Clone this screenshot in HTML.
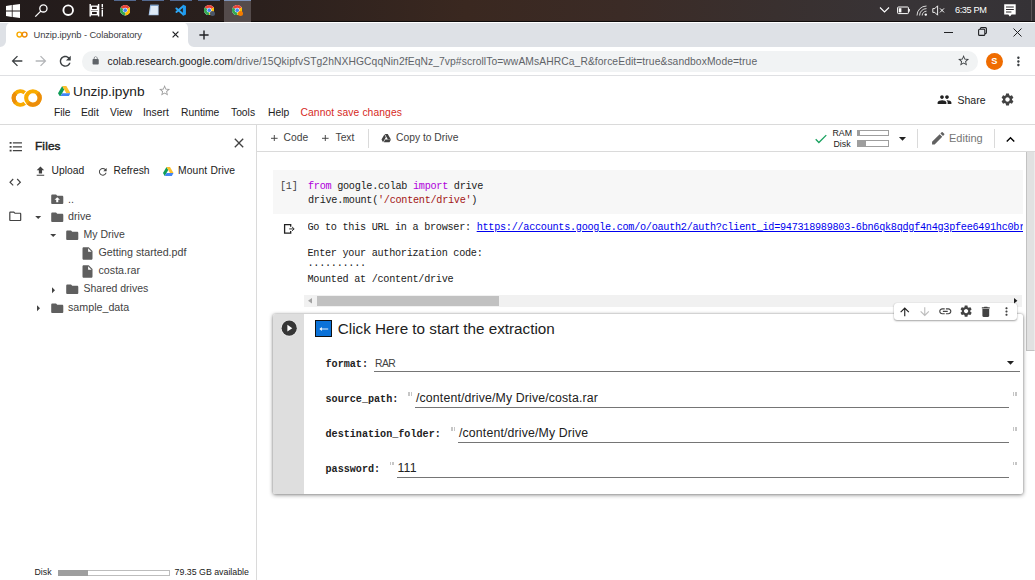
<!DOCTYPE html>
<html>
<head>
<meta charset="utf-8">
<title>Unzip.ipynb - Colaboratory</title>
<style>
*{box-sizing:border-box;margin:0;padding:0}
html,body{width:1035px;height:580px;overflow:hidden;background:#fff;font-family:"Liberation Sans",sans-serif;color:#212121}
.abs{position:absolute}
#root{position:relative;width:1035px;height:580px;overflow:hidden}
/* taskbar */
#taskbar{left:0;top:0;width:1035px;height:21.5px;border-bottom:1.2px solid #100c0c;background:linear-gradient(90deg,#221b1b 0%,#2b201d 25%,#3a2820 45%,#3b2b26 60%,#39302f 75%,#383437 88%,#353236 100%)}
/* tabstrip */
#tabstrip{left:0;top:23.3px;width:1035px;height:23.7px;background:#dee1e6}
#tab{left:5.5px;top:22px;width:182.3px;height:25px;background:#fff;border-radius:6px 6px 0 0}
#tabtitle{left:33.5px;top:28.5px;font-size:9.4px;color:#3c4043;white-space:nowrap;letter-spacing:-0.1px}
/* toolbar */
#toolbar{left:0;top:47px;width:1035px;height:29px;background:#fff;border-bottom:1.2px solid #dfe0e3}
#urlpill{left:82.3px;top:51.2px;width:895.5px;height:20.6px;border-radius:10.3px;background:#f1f3f4}
#url{left:107.5px;top:56px;font-size:10.3px;color:#5f6368;white-space:nowrap;letter-spacing:0.085px}
#url b{font-weight:normal;color:#202124}
/* colab header */
#chead{left:0;top:76px;width:1035px;height:49px;background:#fff;border-bottom:1px solid #dadada}
#doctitle{left:73px;top:84px;font-size:13.7px;color:#212121;white-space:nowrap}
.menu{top:106.5px;font-size:10.3px;color:#212121;white-space:nowrap}
/* left panel */
#left{left:0;top:125px;width:257px;height:455px;background:#fff;border-right:1px solid #dadada}
.t{font-size:10.3px;color:#424242;white-space:nowrap}
/* notebook toolbar */
#nbtool{left:257px;top:125px;width:778px;height:27px;background:#fff;border-bottom:1px solid #dadada}

/* tree */
.row{left:0;width:256px;height:18px}
.fold{fill:#616161}
/* cells */
#code1{left:273px;top:170px;width:750px;height:44px;background:#f7f7f7}
.code{font-family:"Liberation Mono",monospace;font-size:10.2px;letter-spacing:-0.28px;white-space:pre;color:#212121}
#hsb{left:304px;top:295px;width:718px;height:11.7px;background:#f1f1f1}
#hsbthumb{left:317.2px;top:296.2px;width:182px;height:9.5px;background:#c1c1c1}
#vsb{left:1024px;top:153px;width:11px;height:427px;background:#fff;display:none}
#vsbthumb{left:1026px;top:151.5px;width:9px;height:199.5px;background:#e1e1e1;border-left:1px solid #c2c2c2;border-bottom:1px solid #c2c2c2;border-right:1px solid #ececec}
#card{left:273.3px;top:313.5px;width:749.7px;height:180.5px;border-radius:2px;background:#fff;box-shadow:0 1px 4px rgba(0,0,0,.45),0 0 2px rgba(0,0,0,.25)}
#gutter{left:273.3px;top:313.5px;width:30.5px;height:180.5px;background:#dedede;border-radius:2px 0 0 2px}
#ftitle{left:337.8px;top:320px;font-size:15.25px;color:#212121;white-space:nowrap}
.flabel{left:325.5px;font-family:"Liberation Mono",monospace;font-weight:bold;font-size:10.12px;color:#212121;white-space:pre}
.fval{font-size:12.3px;letter-spacing:0.15px;color:#212121;white-space:nowrap}
.fline{height:1px;background:#757575}
.q{font-size:10px;color:#bdbdbd}
#ctool{left:894px;top:303px;width:123.3px;height:17px;background:#fff;border-radius:3px;box-shadow:0 1px 2px rgba(0,0,0,.35),0 0 1px rgba(0,0,0,.2)}
.mono{font-family:"Liberation Mono",monospace}
</style>
</head>
<body>
<div id="root">

<!-- TASKBAR -->
<div id="taskbar" class="abs"></div>


<!-- taskbar indicators -->
<div class="abs" style="left:114px;top:0;width:22px;height:1px;background:#54698f"></div>
<div class="abs" style="left:142px;top:0;width:22px;height:1px;background:#54698f"></div>
<div class="abs" style="left:170px;top:0;width:22px;height:1px;background:#54698f"></div>
<div class="abs" style="left:198px;top:0;width:22px;height:1px;background:#54698f"></div>
<div class="abs" style="left:223.5px;top:0;width:27px;height:21.5px;background:#544b4b"></div>
<div class="abs" style="left:223.5px;top:0;width:27px;height:1px;background:#7f93b8"></div>
<!-- windows logo -->
<svg class="abs" style="left:6px;top:3.5px" width="14" height="14" viewBox="0 0 14 14"><path d="M0 2 L5.8 1.1 V6.6 H0Z M6.6 1 L14 0 V6.6 H6.6Z M0 7.4 H5.8 V12.9 L0 12Z M6.6 7.4 H14 V14 L6.6 13Z" fill="#fff"/></svg>
<!-- search -->
<svg class="abs" style="left:34px;top:3px" width="16" height="16" viewBox="0 0 16 16"><circle cx="9.4" cy="5.4" r="3.6" fill="none" stroke="#fff" stroke-width="1.3"/><path d="M6.8 8.1 L1.3 13.6" stroke="#fff" stroke-width="1.3" fill="none"/></svg>
<!-- cortana -->
<svg class="abs" style="left:62px;top:3.8px" width="12.4" height="12.4" viewBox="0 0 12.4 12.4"><circle cx="6.2" cy="6.2" r="4.8" fill="none" stroke="#fff" stroke-width="1.9"/></svg>
<!-- task view -->
<svg class="abs" style="left:88.5px;top:4px" width="15" height="12.5" viewBox="0 0 15 12.5"><path d="M1.2 0 V12.5 M9.6 0 V12.5 M13.3 0 V3 M13.3 6 V12.5" stroke="#fff" stroke-width="1.4" fill="none"/><rect x="2.4" y="2.2" width="6" height="3.4" fill="none" stroke="#fff" stroke-width="1.3"/><rect x="2.4" y="7.3" width="6" height="3.4" fill="none" stroke="#fff" stroke-width="1.3"/><circle cx="13.3" cy="4.5" r="0.9" fill="#fff"/></svg>
<svg class="abs" style="left:120.0px;top:5.2px" width="10.4" height="10.4" viewBox="0 0 48 48">
<circle cx="24" cy="24" r="24" fill="#fff"/>
<path d="M24 24 L3.2 12 A24 24 0 0 1 44.8 12 Z" fill="#ea4335"/>
<path d="M24 24 L44.8 12 A24 24 0 0 1 24 48 Z" fill="#fbbc04"/>
<path d="M24 24 L24 48 A24 24 0 0 1 3.2 12 Z" fill="#34a853"/>
<circle cx="24" cy="24" r="11" fill="#fff"/>
<circle cx="24" cy="24" r="8.5" fill="#4285f4"/>
</svg>
<!-- notepad -->
<svg class="abs" style="left:147.5px;top:4px" width="12" height="12" viewBox="0 0 12 12"><path d="M2.2 0.8 H10.6 V11.2 H0.6Z" fill="#a9c6e8"/><path d="M3.2 2 H9.8 V10.4 H1.8Z" fill="#dfeaf6"/><path d="M2.2 0.8 H10.6 V1.8 H2.1Z" fill="#6f93bd"/></svg>
<!-- vscode -->
<svg class="abs" style="left:174.6px;top:3.8px" width="11.2" height="12.4" viewBox="0 0 24 26"><path d="M17.500 4.500 L3 16.800 M17.500 21.500 L3 9.200" stroke="#2da6f3" stroke-width="4.200" stroke-linecap="round" fill="none"/><path d="M16.800 0.800 L23.500 4 V22 L16.800 25.200Z" fill="#1f9bf0"/></svg>
<svg class="abs" style="left:204.10000000000002px;top:4.999999999999999px" width="10.4" height="10.4" viewBox="0 0 48 48">
<circle cx="24" cy="24" r="24" fill="#fff"/>
<path d="M24 24 L3.2 12 A24 24 0 0 1 44.8 12 Z" fill="#ea4335"/>
<path d="M24 24 L44.8 12 A24 24 0 0 1 24 48 Z" fill="#fbbc04"/>
<path d="M24 24 L24 48 A24 24 0 0 1 3.2 12 Z" fill="#34a853"/>
<circle cx="24" cy="24" r="11" fill="#fff"/>
<circle cx="24" cy="24" r="8.5" fill="#4285f4"/>
</svg><div class="abs" style="left:209.8px;top:10.7px;width:5.5px;height:5.5px;border-radius:50%;background:#4a5568"></div><svg class="abs" style="left:232.0px;top:4.999999999999999px" width="10.4" height="10.4" viewBox="0 0 48 48">
<circle cx="24" cy="24" r="24" fill="#fff"/>
<path d="M24 24 L3.2 12 A24 24 0 0 1 44.8 12 Z" fill="#ea4335"/>
<path d="M24 24 L44.8 12 A24 24 0 0 1 24 48 Z" fill="#fbbc04"/>
<path d="M24 24 L24 48 A24 24 0 0 1 3.2 12 Z" fill="#34a853"/>
<circle cx="24" cy="24" r="11" fill="#fff"/>
<circle cx="24" cy="24" r="8.5" fill="#4285f4"/>
</svg><div class="abs" style="left:237.7px;top:10.7px;width:5.5px;height:5.5px;border-radius:50%;background:#f57c00"></div>
<!-- tray -->
<svg class="abs" style="left:879px;top:6px" width="11" height="8" viewBox="0 0 11 8"><path d="M1 1.5 L5.5 6 L10 1.5" stroke="#fff" stroke-width="1.1" fill="none"/></svg>
<svg class="abs" style="left:897px;top:6px" width="13" height="9" viewBox="0 0 13 9"><rect x="0.6" y="1" width="10.8" height="6.6" rx="0.8" fill="none" stroke="#fff" stroke-width="1"/><rect x="1.8" y="2.2" width="2.6" height="4.2" fill="#fff"/><rect x="11.8" y="3" width="1" height="2.6" fill="#fff"/></svg>
<svg class="abs" style="left:916px;top:5px" width="12" height="11" viewBox="0 0 12 11"><path d="M1 10.5 A9.5 9.5 0 0 1 10.5 1 M3.6 10.5 A6.9 6.9 0 0 1 10.5 3.6 M6.2 10.5 A4.3 4.3 0 0 1 10.5 6.2" stroke="#d8d8d8" stroke-width="1" fill="none"/><circle cx="9.8" cy="9.6" r="1.2" fill="#fff"/></svg>
<svg class="abs" style="left:932px;top:5px" width="14" height="11" viewBox="0 0 14 11"><path d="M0.8 3.6 H2.8 L5.6 0.8 V10.2 L2.8 7.4 H0.8Z" fill="none" stroke="#fff" stroke-width="0.9"/><path d="M8 3.4 L12 7.4 M12 3.4 L8 7.4" stroke="#fff" stroke-width="1" fill="none"/></svg>
<div class="abs" style="left:955px;top:4.5px;font-size:9.2px;color:#fff;letter-spacing:-0.4px;white-space:nowrap">6:35 PM</div>
<svg class="abs" style="left:1004px;top:4px" width="12" height="13" viewBox="0 0 12 13"><path d="M0.2 0.2 H11.700 V10.400 H7.600 L5.900 12.500 L4.300 10.400 H0.200Z" fill="#fff"/><path d="M2 3 H9.800 M2 5.500 H9.800 M2 8 H7.400" stroke="#2e2a2d" stroke-width="1.15" fill="none"/></svg>
<div class="abs" style="left:1031px;top:0;width:1px;height:21px;background:#5a5558"></div>

<div class="abs" style="left:0;top:21.5px;width:1035px;height:2px;background:#fff"></div>
<!-- TAB STRIP -->
<div id="tabstrip" class="abs"></div>
<div id="tab" class="abs"></div>
<div id="tabtitle" class="abs">Unzip.ipynb - Colaboratory</div>


<!-- tab bottom flares -->
<svg class="abs" style="left:0;top:41px" width="6" height="6" viewBox="0 0 6 6"><path d="M6 0 V6 H0 A6 6 0 0 0 6 0Z" fill="#fff"/></svg>
<svg class="abs" style="left:188px;top:41px" width="6" height="6" viewBox="0 0 6 6"><path d="M0 0 V6 H6 A6 6 0 0 1 0 0Z" fill="#fff"/></svg>
<!-- favicon -->
<svg class="abs" style="left:15.5px;top:31px" width="12" height="7" viewBox="0 0 12 7"><circle cx="3.4" cy="3.5" r="2.4" fill="none" stroke="#f9ab00" stroke-width="1.45"/><circle cx="8.6" cy="3.5" r="2.4" fill="none" stroke="#ee8c0a" stroke-width="1.45"/></svg>
<!-- tab close / new tab -->
<svg class="abs" style="left:172.3px;top:31.2px" width="7" height="7" viewBox="0 0 7 7"><path d="M0.6 0.6 L6.4 6.4 M6.4 0.6 L0.6 6.4" stroke="#202124" stroke-width="1.2"/></svg>
<svg class="abs" style="left:199.4px;top:29.7px" width="10" height="10" viewBox="0 0 10 10"><path d="M5 0.4 V9.6 M0.4 5 H9.6" stroke="#202124" stroke-width="1.4"/></svg>
<!-- window controls -->
<div class="abs" style="left:944px;top:32px;width:8.5px;height:1.1px;background:#202124"></div>
<svg class="abs" style="left:978.3px;top:27.3px" width="9" height="9" viewBox="0 0 9 9"><rect x="0.6" y="2.2" width="6.2" height="6.2" rx="1" fill="none" stroke="#202124" stroke-width="1.1"/><path d="M2.4 2 V1.6 A1 1 0 0 1 3.4 0.6 H7.4 A1 1 0 0 1 8.4 1.6 V5.6 A1 1 0 0 1 7.4 6.6 H7" fill="none" stroke="#202124" stroke-width="1.1"/></svg>
<svg class="abs" style="left:1013px;top:27.5px" width="9" height="9" viewBox="0 0 9 9"><path d="M0.5 0.5 L8.5 8.5 M8.5 0.5 L0.5 8.5" stroke="#202124" stroke-width="1"/></svg>

<!-- BROWSER TOOLBAR -->
<div id="toolbar" class="abs"></div>
<div id="urlpill" class="abs"></div>
<div id="url" class="abs"><b>colab.research.google.com</b>/drive/15QkipfvSTg2hNXHGCqqNin2fEqNz_7vp#scrollTo=wwAMsAHRCa_R&amp;forceEdit=true&amp;sandboxMode=true</div>


<!-- toolbar icons -->
<svg class="abs" style="left:8.70px;top:53.00px" width="16" height="16" viewBox="0 0 24 24"><path d="M20 11H7.83l5.59-5.59L12 4l-8 8 8 8 1.41-1.41L7.83 13H20v-2z" fill="#3c4043"/></svg><svg class="abs" style="left:33.00px;top:53.00px" width="16" height="16" viewBox="0 0 24 24"><path d="M12 4l-1.41 1.41L16.17 11H4v2h12.17l-5.58 5.59L12 20l8-8z" fill="#b4b6b9"/></svg><svg class="abs" style="left:57.15px;top:52.75px" width="16.5" height="16.5" viewBox="0 0 24 24"><path d="M17.65 6.35C16.2 4.9 14.21 4 12 4c-4.42 0-7.99 3.58-7.99 8s3.57 8 7.99 8c3.73 0 6.84-2.55 7.73-6h-2.08c-.82 2.33-3.04 4-5.65 4-3.31 0-6-2.69-6-6s2.69-6 6-6c1.66 0 3.14.69 4.22 1.78L13 11h7V4l-2.35 2.35z" fill="#3c4043"/></svg><svg class="abs" style="left:90.95px;top:56.25px" width="9.3" height="9.3" viewBox="0 0 24 24"><path d="M18 8h-1V6c0-2.76-2.24-5-5-5S7 3.24 7 6v2H6c-1.1 0-2 .9-2 2v10c0 1.1.9 2 2 2h12c1.1 0 2-.9 2-2V10c0-1.1-.9-2-2-2zm-2.9 0H8.9V6c0-1.71 1.39-3.1 3.1-3.1 1.71 0 3.1 1.39 3.1 3.1v2z" fill="#5f6368"/></svg><svg class="abs" style="left:956.90px;top:54.40px" width="13.2" height="13.2" viewBox="0 0 24 24"><path d="M22 9.24l-7.19-.62L12 2 9.19 8.63 2 9.24l5.46 4.73L5.82 21 12 17.27 18.18 21l-1.63-7.03L22 9.24zM12 15.4l-3.76 2.27 1-4.28-3.32-2.88 4.38-.38L12 6.1l1.71 4.04 4.38.38-3.32 2.88 1 4.28L12 15.4z" fill="#3c4043"/></svg>
<div class="abs" style="left:985.8px;top:52.5px;width:17px;height:17px;border-radius:50%;background:#ef6c00;color:#fff;font-size:9.2px;font-weight:bold;text-align:center;line-height:17px">S</div>
<svg class="abs" style="left:1011.1px;top:53.7px" width="14.8" height="14.8" viewBox="0 0 24 24"><path d="M12 8c1.1 0 2-.9 2-2s-.9-2-2-2-2 .9-2 2 .9 2 2 2zm0 2c-1.1 0-2 .9-2 2s.9 2 2 2 2-.9 2-2-.9-2-2-2zm0 6c-1.1 0-2 .9-2 2s.9 2 2 2 2-.9 2-2-.9-2-2-2z" fill="#3c4043"/></svg>
<!-- COLAB HEADER -->
<div id="chead" class="abs"></div>

<!-- colab logo -->
<svg class="abs" style="left:11px;top:89px" width="32" height="18" viewBox="0 0 32 18">
<path d="M13.74 3.83 A6.75 6.75 0 1 0 13.74 14.17" fill="none" stroke="#f9ab00" stroke-width="4"/>
<path d="M4.63 4.23 A6.75 6.75 0 0 0 4.63 13.77" fill="none" stroke="#ec8d0a" stroke-width="4.1"/>
<circle cx="21.9" cy="9" r="6.75" fill="none" stroke="#fff" stroke-width="4.9"/>
<circle cx="21.9" cy="9" r="6.75" fill="none" stroke="#f9ab00" stroke-width="4.1"/>
<path d="M26.67 4.23 A6.75 6.75 0 0 1 21.9 15.75 A6.75 6.75 0 0 1 17.13 13.77" fill="none" stroke="#ec8d0a" stroke-width="4.1"/>
</svg>
<svg class="abs" style="left:57.5px;top:85.5px" width="12.5" height="10.82" viewBox="0 0 24 20.8"><path d="M8 0 L0 13.86 L4 20.8 L12 6.93Z" fill="#0f9d58"/><path d="M8 0 H16 L24 13.86 H16Z" fill="#fbc02d"/><path d="M8 13.86 H24 L20 20.8 H4Z" fill="#4285f4"/></svg><svg class="abs" style="left:158.4px;top:84.4px" width="13.2" height="13.2" viewBox="0 0 24 24"><path d="M22 9.24l-7.19-.62L12 2 9.19 8.63 2 9.24l5.46 4.73L5.82 21 12 17.27 18.18 21l-1.63-7.03L22 9.24zM12 15.4l-3.76 2.27 1-4.28-3.32-2.88 4.38-.38L12 6.1l1.71 4.04 4.38.38-3.32 2.88 1 4.28L12 15.4z" fill="#9e9e9e"/></svg><svg class="abs" style="left:936.50px;top:92.00px" width="15" height="15" viewBox="0 0 24 24"><path d="M16 11c1.66 0 2.99-1.34 2.99-3S17.66 5 16 5c-1.66 0-3 1.34-3 3s1.34 3 3 3zm-8 0c1.66 0 2.99-1.34 2.99-3S9.66 5 8 5C6.34 5 5 6.34 5 8s1.34 3 3 3zm0 2c-2.33 0-7 1.17-7 3.5V19h14v-2.5c0-2.33-4.67-3.5-7-3.5zm8 0c-.29 0-.62.02-.97.05 1.16.84 1.97 1.97 1.97 3.45V19h6v-2.5c0-2.33-4.67-3.5-7-3.5z" fill="#212121"/></svg><svg class="abs" style="left:999.8px;top:92px" width="15" height="15" viewBox="0 0 24 24"><path d="M19.14 12.94c.04-.3.06-.61.06-.94 0-.32-.02-.64-.07-.94l2.03-1.58c.18-.14.23-.41.12-.61l-1.92-3.32c-.12-.22-.37-.29-.59-.22l-2.39.96c-.5-.38-1.03-.7-1.62-.94l-.36-2.54c-.04-.24-.24-.41-.48-.41h-3.84c-.24 0-.43.17-.47.41l-.36 2.54c-.59.24-1.13.57-1.62.94l-2.39-.96c-.22-.08-.47 0-.59.22L2.74 8.87c-.12.21-.08.47.12.61l2.03 1.58c-.05.3-.09.63-.09.94s.02.64.07.94l-2.03 1.58c-.18.14-.23.41-.12.61l1.92 3.32c.12.22.37.29.59.22l2.39-.96c.5.38 1.03.7 1.62.94l.36 2.54c.05.24.24.41.48.41h3.84c.24 0 .44-.17.47-.41l.36-2.54c.59-.24 1.13-.56 1.62-.94l2.39.96c.22.08.47 0 .59-.22l1.92-3.32c.12-.22.07-.47-.12-.61l-2.01-1.58zM12 15.6c-1.98 0-3.6-1.62-3.6-3.6s1.62-3.6 3.6-3.6 3.6 1.62 3.6 3.6-1.62 3.6-3.6 3.6z" fill="#424242"/></svg>
<div id="doctitle" class="abs">Unzip.ipynb</div>
<div class="abs menu" style="left:54px">File</div>
<div class="abs menu" style="left:81px">Edit</div>
<div class="abs menu" style="left:110px">View</div>
<div class="abs menu" style="left:143px">Insert</div>
<div class="abs menu" style="left:181px">Runtime</div>
<div class="abs menu" style="left:231px">Tools</div>
<div class="abs menu" style="left:268px">Help</div>
<div class="abs menu" style="left:300.5px;color:#d62a24;letter-spacing:0.1px">Cannot save changes</div>

<!-- LEFT PANEL -->
<div id="left" class="abs"></div>

<!-- NOTEBOOK TOOLBAR -->
<div id="nbtool" class="abs"></div>


<!-- left panel icons -->
<svg class="abs" style="left:7.9px;top:139.1px" width="15.6" height="15.6" viewBox="0 0 24 24"><path d="M2.5 4.700 h3 v2.600 h-3z M2.500 10.700 h3 v2.600 h-3z M2.500 16.700 h3 v2.600 h-3z M7.500 5.100 h14 v1.800 h-14z M7.500 11.100 h14 v1.800 h-14z M7.500 17.100 h14 v1.800 h-14z" fill="#424242"/></svg><svg class="abs" style="left:230.50px;top:135.00px" width="16" height="16" viewBox="0 0 24 24"><path d="M19 6.41L17.59 5 12 10.59 6.41 5 5 6.41 10.59 12 5 17.59 6.41 19 12 13.41 17.59 19 19 17.59 13.41 12z" fill="#424242"/></svg><svg class="abs" style="left:34.35px;top:165.15px" width="12.9" height="12.9" viewBox="0 0 24 24"><path d="M9 16h6v-6h4l-7-7-7 7h4zm-4 2h14v2H5z" fill="#424242"/></svg><svg class="abs" style="left:96.9px;top:165.6px" width="11.6" height="11.6" viewBox="0 0 24 24"><path d="M17.65 6.35C16.2 4.9 14.21 4 12 4c-4.42 0-7.99 3.58-7.99 8s3.57 8 7.99 8c3.73 0 6.84-2.55 7.73-6h-2.08c-.82 2.33-3.04 4-5.65 4-3.31 0-6-2.69-6-6s2.69-6 6-6c1.66 0 3.14.69 4.22 1.78L13 11h7V4l-2.35 2.35z" fill="#424242"/></svg><svg class="abs" style="left:163px;top:166.5px" width="10.5" height="9.09" viewBox="0 0 24 20.8"><path d="M8 0 L0 13.86 L4 20.8 L12 6.93Z" fill="#0f9d58"/><path d="M8 0 H16 L24 13.86 H16Z" fill="#fbc02d"/><path d="M8 13.86 H24 L20 20.8 H4Z" fill="#4285f4"/></svg><svg class="abs" style="left:8.30px;top:174.50px" width="14.4" height="14.4" viewBox="0 0 24 24"><path d="M9.4 16.6L4.8 12l4.6-4.6L8 6l-6 6 6 6 1.4-1.4zm5.2 0l4.6-4.6-4.6-4.6L16 6l6 6-6 6-1.4-1.4z" fill="#424242"/></svg><svg class="abs" style="left:8.25px;top:209.25px" width="14.5" height="14.5" viewBox="0 0 24 24"><path d="M9.17 6l2 2H20v10H4V6h5.17M10 4H4c-1.1 0-1.99.9-1.99 2L2 18c0 1.1.9 2 2 2h16c1.1 0 2-.9 2-2V8c0-1.1-.9-2-2-2h-8l-2-2z" fill="#424242"/></svg><svg class="abs" style="left:49.75px;top:191.75px" width="14.5" height="14.5" viewBox="0 0 24 24"><path d="M10 4H4c-1.1 0-1.99.9-1.99 2L2 18c0 1.1.9 2 2 2h16c1.1 0 2-.9 2-2V8c0-1.1-.9-2-2-2h-8l-2-2z" fill="#5f5f5f"/><path d="M12 8.500 L16.500 13 H13.700 V17 H10.300 V13 H7.500Z" fill="#fff"/></svg><svg class="abs" style="left:30.80px;top:209.80px" width="14.4" height="14.4" viewBox="0 0 24 24"><path d="M7 10l5 5 5-5z" fill="#424242"/></svg><svg class="abs" style="left:49.75px;top:209.55px" width="14.5" height="14.5" viewBox="0 0 24 24"><path d="M10 4H4c-1.1 0-1.99.9-1.99 2L2 18c0 1.1.9 2 2 2h16c1.1 0 2-.9 2-2V8c0-1.1-.9-2-2-2h-8l-2-2z" fill="#5f5f5f"/></svg><svg class="abs" style="left:46.30px;top:227.50px" width="14.4" height="14.4" viewBox="0 0 24 24"><path d="M7 10l5 5 5-5z" fill="#424242"/></svg><svg class="abs" style="left:64.75px;top:227.55px" width="14.5" height="14.5" viewBox="0 0 24 24"><path d="M10 4H4c-1.1 0-1.99.9-1.99 2L2 18c0 1.1.9 2 2 2h16c1.1 0 2-.9 2-2V8c0-1.1-.9-2-2-2h-8l-2-2z" fill="#5f5f5f"/></svg><svg class="abs" style="left:79.80px;top:245.50px" width="15" height="15" viewBox="0 0 24 24"><path d="M6 2c-1.1 0-1.99.9-1.99 2L4 20c0 1.1.89 2 1.99 2H18c1.1 0 2-.9 2-2V8l-6-6H6zm7 7V3.500L18.500 9H13z" fill="#5f5f5f"/></svg><svg class="abs" style="left:79.80px;top:263.70px" width="15" height="15" viewBox="0 0 24 24"><path d="M6 2c-1.1 0-1.99.9-1.99 2L4 20c0 1.1.89 2 1.99 2H18c1.1 0 2-.9 2-2V8l-6-6H6zm7 7V3.500L18.500 9H13z" fill="#5f5f5f"/></svg><svg class="abs" style="left:46.10px;top:282.80px" width="14.4" height="14.4" viewBox="0 0 24 24"><path d="M10 17l5-5-5-5v10z" fill="#424242"/></svg><svg class="abs" style="left:64.75px;top:282.45px" width="14.5" height="14.5" viewBox="0 0 24 24"><path d="M10 4H4c-1.1 0-1.99.9-1.99 2L2 18c0 1.1.9 2 2 2h16c1.1 0 2-.9 2-2V8c0-1.1-.9-2-2-2h-8l-2-2z" fill="#5f5f5f"/></svg><svg class="abs" style="left:31.10px;top:300.80px" width="14.4" height="14.4" viewBox="0 0 24 24"><path d="M10 17l5-5-5-5v10z" fill="#424242"/></svg><svg class="abs" style="left:49.55px;top:300.55px" width="14.5" height="14.5" viewBox="0 0 24 24"><path d="M10 4H4c-1.1 0-1.99.9-1.99 2L2 18c0 1.1.9 2 2 2h16c1.1 0 2-.9 2-2V8c0-1.1-.9-2-2-2h-8l-2-2z" fill="#5f5f5f"/></svg>
<!-- files header -->
<div class="abs" style="left:35px;top:138.6px;font-size:11.8px;color:#212121;-webkit-text-stroke:0.45px #212121;letter-spacing:0.15px">Files</div>
<div class="abs t" style="left:51.5px;top:165px;color:#212121">Upload</div>
<div class="abs t" style="left:113.5px;top:165px;color:#212121">Refresh</div>
<div class="abs t" style="left:178px;top:165px;color:#212121;letter-spacing:0.15px">Mount Drive</div>
<!-- tree -->
<div class="abs t" style="left:68px;top:192.7px;font-size:10.7px">..</div>
<div class="abs t" style="left:68px;top:209.7px;font-size:10.7px">drive</div>
<div class="abs t" style="left:83.5px;top:227.7px;font-size:10.5px">My Drive</div>
<div class="abs t" style="left:98.5px;top:245.7px;font-size:10.7px">Getting started.pdf</div>
<div class="abs t" style="left:98.5px;top:263.7px;font-size:10.7px">costa.rar</div>
<div class="abs t" style="left:83.5px;top:281.7px;font-size:10.5px">Shared drives</div>
<div class="abs t" style="left:68px;top:300.7px;font-size:10.7px">sample_data</div>
<!-- disk -->
<div class="abs" style="left:34.5px;top:567.4px;font-size:8.8px;color:#212121">Disk</div>
<div class="abs" style="left:58px;top:569.5px;width:112px;height:6px;border:1px solid #bdbdbd;background:#fff"></div>
<div class="abs" style="left:58px;top:569.5px;width:30px;height:6px;background:#9e9e9e"></div>
<div class="abs" style="left:174.6px;top:567.4px;font-size:8.8px;color:#212121;white-space:nowrap">79.35 GB available</div>


<!-- nb toolbar icons -->
<svg class="abs" style="left:381.35px;top:132.75px" width="10.5" height="10.5" viewBox="0 0 24 24"><path d="M7.71 3.5L1.15 15l3.43 6 6.55-11.5L7.71 3.5zM9.73 15L6.3 21h13.12l3.43-6H9.73zM22.28 14L15.42 2H8.58l6.86 12h6.84z" fill="#424242"/></svg><svg class="abs" style="left:813.45px;top:130.75px" width="15.7" height="15.7" viewBox="0 0 24 24"><path d="M9 16.17L4.83 12l-1.42 1.41L9 19 21 7l-1.41-1.41z" fill="#1aa260"/></svg><svg class="abs" style="left:893.90px;top:130.10px" width="17" height="17" viewBox="0 0 24 24"><path d="M7 10l5 5 5-5z" fill="#212121"/></svg><svg class="abs" style="left:930.05px;top:130.15px" width="16.5" height="16.5" viewBox="0 0 24 24"><path d="M3 17.25V21h3.75L17.81 9.94l-3.75-3.75L3 17.25zM20.71 7.04c.39-.39.39-1.02 0-1.41l-2.34-2.34c-.39-.39-1.02-.39-1.41 0l-1.83 1.83 3.75 3.75 1.83-1.83z" fill="#616161"/></svg><svg class="abs" style="left:1002.30px;top:130.60px" width="17" height="17" viewBox="0 0 24 24"><path d="M12 8l-6 6 1.41 1.41L12 10.83l4.59 4.58L18 14z" fill="#000"/></svg><!-- notebook toolbar items -->
<svg class="abs" style="left:271.2px;top:134.9px" width="6.6" height="6.6" viewBox="0 0 7 7"><path d="M3.5 0 V7 M0 3.5 H7" stroke="#424242" stroke-width="1"/></svg><div class="abs t" style="left:283.5px;top:132px;color:#424242">Code</div>
<svg class="abs" style="left:322px;top:134.9px" width="6.6" height="6.6" viewBox="0 0 7 7"><path d="M3.5 0 V7 M0 3.5 H7" stroke="#424242" stroke-width="1"/></svg><div class="abs t" style="left:335.5px;top:132px;color:#424242">Text</div>
<div class="abs" style="left:368px;top:129px;width:1px;height:19px;background:#dadada"></div>
<div class="abs t" style="left:396px;top:132px;color:#424242">Copy to Drive</div>
<div class="abs" style="left:832.5px;top:128px;font-size:8.8px;color:#212121">RAM</div>
<div class="abs" style="left:833.5px;top:138.5px;font-size:8.8px;color:#212121">Disk</div>
<div class="abs" style="left:857px;top:129.5px;width:32px;height:6.5px;border:1px solid #9e9e9e;background:#fff"></div>
<div class="abs" style="left:857px;top:129.5px;width:3px;height:6.5px;background:#9e9e9e"></div>
<div class="abs" style="left:857px;top:140px;width:32px;height:6.5px;border:1px solid #9e9e9e;background:#fff"></div>
<div class="abs" style="left:857px;top:140px;width:9px;height:6.5px;background:#9e9e9e"></div>
<div class="abs" style="left:917px;top:129px;width:1px;height:19px;background:#dadada"></div>
<div class="abs" style="left:949px;top:131.5px;font-size:11px;color:#757575">Editing</div>
<div class="abs" style="left:993.5px;top:129px;width:1px;height:19px;background:#dadada"></div>
<div class="abs" style="left:957.5px;top:93.5px;font-size:10.5px;color:#212121">Share</div>

<!-- scrollbars -->
<div id="vsb" class="abs"></div><div id="vsbthumb" class="abs"></div>

<!-- cell 1 -->
<div id="code1" class="abs"></div>
<div class="abs code" style="left:280px;top:180.5px;color:#424242">[1]</div>
<div class="abs code" style="left:308px;top:180.5px"><span style="color:#af00db">from</span> google.colab <span style="color:#af00db">import</span> drive</div>
<div class="abs code" style="left:308px;top:194.5px">drive.mount(<span style="color:#a31515">'/content/drive'</span>)</div>
<div class="abs code" style="left:307.5px;top:221.5px;width:715.5px;overflow:hidden">Go to this URL in a browser: <span style="color:#0000ee;text-decoration:underline">https://accounts.google.com/o/oauth2/auth?client_id=947318989803-6bn6qk8qdgf4n4g3pfee6491hc0brc4i.apps.googleusercontent.com</span></div>
<div class="abs code" style="left:307.5px;top:247.5px">Enter your authorization code:</div>
<div class="abs code" style="left:307.5px;top:260px">··········</div>
<div class="abs code" style="left:307.5px;top:273.5px">Mounted at /content/drive</div>
<div id="hsb" class="abs"></div><div id="hsbthumb" class="abs"></div>

<!-- cell 2 -->
<div id="card" class="abs"></div>
<div id="gutter" class="abs"></div>
<div class="abs" style="left:314.7px;top:319.8px;width:17.1px;height:17.2px;background:#0b72d8;border:0.8px solid #111"></div>
<div id="ftitle" class="abs">Click Here to start the extraction</div>
<div class="abs flabel" style="top:359px">format:</div>
<div class="abs" style="left:375px;top:357.6px;font-size:10.4px;letter-spacing:-0.6px;color:#424242">RAR</div>
<div class="abs fline" style="left:374px;top:370.5px;width:645.5px"></div>
<div class="abs flabel" style="top:394px">source_path:</div>
<div class="abs fval" style="left:416px;top:391px">/content/drive/My Drive/costa.rar</div>
<div class="abs fline" style="left:415px;top:407px;width:593.5px"></div>
<div class="abs flabel" style="top:429px">destination_folder:</div>
<div class="abs fval" style="left:459px;top:426px">/content/drive/My Drive</div>
<div class="abs fline" style="left:458px;top:442px;width:550.5px"></div>
<div class="abs flabel" style="top:464px">password:</div>
<div class="abs fval" style="left:397.5px;top:461px">111</div>
<div class="abs fline" style="left:397px;top:477px;width:611.5px"></div>
<!-- quotes -->
<div class="abs" style="left:408.1px;top:392px;width:1.5px;height:3.8px;background:#c6c6c6"></div><div class="abs" style="left:410.5px;top:392px;width:1.5px;height:3.8px;background:#c6c6c6"></div><div class="abs" style="left:1012.7px;top:392px;width:1.5px;height:3.8px;background:#c6c6c6"></div><div class="abs" style="left:1015.1px;top:392px;width:1.5px;height:3.8px;background:#c6c6c6"></div><div class="abs" style="left:451.3px;top:426.9px;width:1.5px;height:3.8px;background:#c6c6c6"></div><div class="abs" style="left:453.7px;top:426.9px;width:1.5px;height:3.8px;background:#c6c6c6"></div><div class="abs" style="left:1012.7px;top:426.9px;width:1.5px;height:3.8px;background:#c6c6c6"></div><div class="abs" style="left:1015.1px;top:426.9px;width:1.5px;height:3.8px;background:#c6c6c6"></div><div class="abs" style="left:389.7px;top:461.7px;width:1.5px;height:3.8px;background:#c6c6c6"></div><div class="abs" style="left:392.09999999999997px;top:461.7px;width:1.5px;height:3.8px;background:#c6c6c6"></div><div class="abs" style="left:1012.7px;top:461.7px;width:1.5px;height:3.8px;background:#c6c6c6"></div><div class="abs" style="left:1015.1px;top:461.7px;width:1.5px;height:3.8px;background:#c6c6c6"></div>
<div id="ctool" class="abs"></div>
<!-- cell icons -->
<svg class="abs" style="left:308px;top:298.4px" width="4" height="5.4" viewBox="0 0 4 5.4"><path d="M4 0 V5.4 L0 2.7Z" fill="#a3a3a3"/></svg><svg class="abs" style="left:1014.3px;top:298.2px" width="3.4" height="5.4" viewBox="0 0 3.4 5.4"><path d="M0 0 V5.4 L3.4 2.7Z" fill="#202020"/></svg><svg class="abs" style="left:283px;top:222.5px" width="13" height="12" viewBox="0 0 13 12"><path d="M7.700 3.800 V1.600 H1.600 V10.200 H7.700 V8" fill="none" stroke="#212121" stroke-width="1.3"/><path d="M6.200 5.900 H10.800 M9 3.900 L11.200 5.900 L9 7.900" fill="none" stroke="#212121" stroke-width="0.9"/></svg><svg class="abs" style="left:280.8px;top:320.3px" width="16.4" height="16.4" viewBox="0 0 16.4 16.4"><circle cx="8.2" cy="8.2" r="8.2" fill="#f2f2f2"/><circle cx="8.2" cy="8.2" r="7.6" fill="#363636"/><path d="M6.400 4.800 L11.300 8.200 L6.400 11.600Z" fill="#fff"/></svg><svg class="abs" style="left:318.6px;top:325.6px" width="10" height="6" viewBox="0 0 10 6"><path d="M2.800 1 L0.400 3 L2.800 5Z" fill="#fff"/><path d="M2 3 H9.200" stroke="#fff" stroke-width="0.9"/></svg><svg class="abs" style="left:1002.00px;top:353.80px" width="17" height="17" viewBox="0 0 24 24"><path d="M7 10l5 5 5-5z" fill="#212121"/></svg><svg class="abs" style="left:897.65px;top:304.65px" width="13.5" height="13.5" viewBox="0 0 24 24"><path d="M4 12l1.41 1.41L11 7.83V20h2V7.83l5.58 5.59L20 12l-8-8-8 8z" fill="#212121"/></svg><svg class="abs" style="left:918.15px;top:304.65px" width="13.5" height="13.5" viewBox="0 0 24 24"><path d="M20 12l-1.41-1.41L13 16.17V4h-2v12.17l-5.58-5.59L4 12l8 8 8-8z" fill="#bdbdbd"/></svg><svg class="abs" style="left:937.90px;top:304.00px" width="14.6" height="14.6" viewBox="0 0 24 24"><path d="M3.9 12c0-1.71 1.39-3.1 3.1-3.1h4V7H7c-2.76 0-5 2.24-5 5s2.24 5 5 5h4v-1.9H7c-1.71 0-3.1-1.39-3.1-3.1zM8 13h8v-2H8v2zm9-6h-4v1.9h4c1.71 0 3.1 1.39 3.1 3.1s-1.39 3.1-3.1 3.1h-4V17h4c2.76 0 5-2.24 5-5s-2.240-5-5-5z" fill="#424242"/></svg><svg class="abs" style="left:958.60px;top:304.30px" width="14.2" height="14.2" viewBox="0 0 24 24"><path d="M19.14 12.94c.04-.3.06-.61.06-.94 0-.32-.02-.64-.07-.94l2.03-1.58c.18-.14.23-.41.12-.61l-1.92-3.32c-.12-.22-.37-.29-.59-.22l-2.39.96c-.5-.38-1.03-.7-1.62-.94l-.36-2.54c-.04-.24-.24-.41-.48-.41h-3.84c-.24 0-.43.17-.47.41l-.36 2.54c-.59.24-1.13.57-1.62.94l-2.39-.96c-.22-.08-.47 0-.59.22L2.74 8.87c-.12.21-.08.47.12.61l2.03 1.58c-.05.3-.09.63-.09.94s.02.64.07.94l-2.03 1.58c-.18.14-.23.41-.12.61l1.92 3.32c.12.22.37.29.59.22l2.39-.96c.5.38 1.03.7 1.62.94l.36 2.54c.05.24.24.41.48.41h3.84c.24 0 .44-.17.47-.41l.36-2.54c.59-.24 1.13-.56 1.62-.94l2.39.96c.22.08.47 0 .59-.22l1.92-3.32c.12-.22.07-.47-.12-.61l-2.01-1.58zM12 15.6c-1.98 0-3.6-1.62-3.6-3.6s1.62-3.6 3.6-3.6 3.6 1.62 3.6 3.6-1.62 3.6-3.6 3.6z" fill="#424242"/></svg><svg class="abs" style="left:979.00px;top:304.50px" width="13.6" height="13.6" viewBox="0 0 24 24"><path d="M6 19c0 1.1.9 2 2 2h8c1.1 0 2-.9 2-2V7H6v12zM19 4h-3.500l-1-1h-5l-1 1H5v2h14V4z" fill="#424242"/></svg><svg class="abs" style="left:999.90px;top:304.80px" width="13" height="13" viewBox="0 0 24 24"><path d="M12 8c1.1 0 2-.9 2-2s-.9-2-2-2-2 .9-2 2 .9 2 2 2zm0 2c-1.1 0-2 .9-2 2s.9 2 2 2 2-.9 2-2-.9-2-2-2zm0 6c-1.1 0-2 .9-2 2s.9 2 2 2 2-.9 2-2-.9-2-2-2z" fill="#424242"/></svg>

</div>
</body>
</html>
